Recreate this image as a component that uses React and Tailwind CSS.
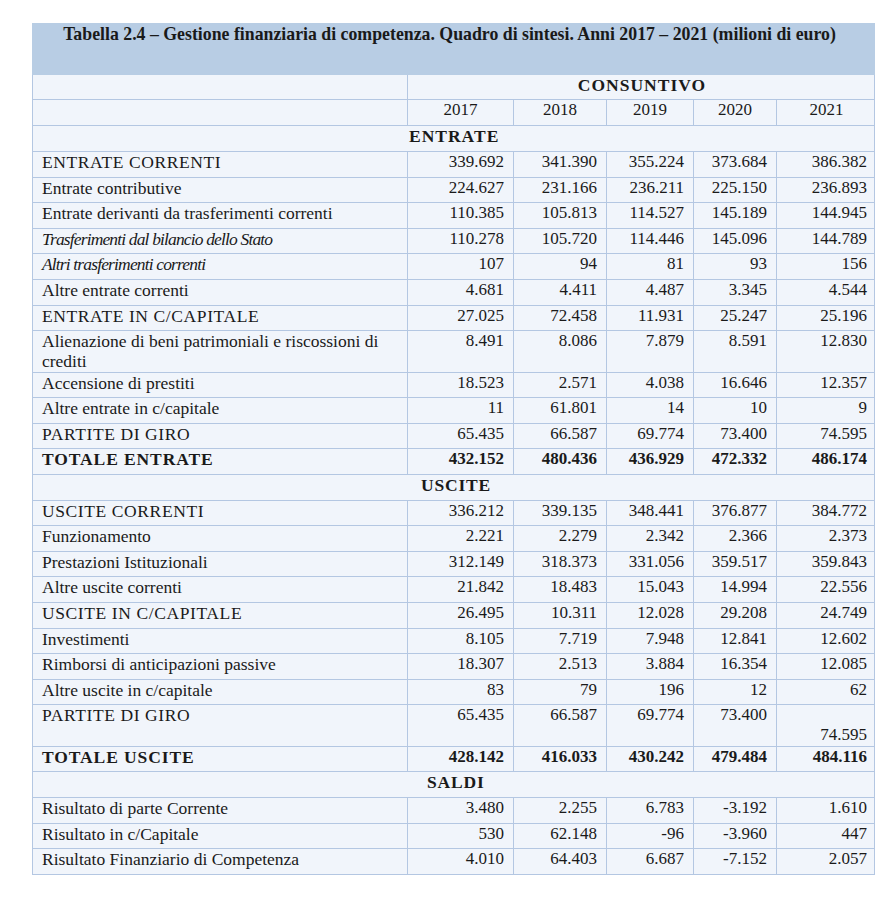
const ROWS = [
  { label: "ENTRATE CORRENTI", v: ["339.692", "341.390", "355.224", "373.684", "386.382"], caps: true },
  { label: "Entrate contributive", v: ["224.627", "231.166", "236.211", "225.150", "236.893"] },
  { label: "Entrate derivanti da trasferimenti correnti", v: ["110.385", "105.813", "114.527", "145.189", "144.945"] },
  { label: "Trasferimenti dal bilancio dello Stato", v: ["110.278", "105.720", "114.446", "145.096", "144.789"], italic: true },
  { label: "Altri trasferimenti correnti", v: ["107", "94", "81", "93", "156"], italic: true },
  { label: "Altre entrate correnti", v: ["4.681", "4.411", "4.487", "3.345", "4.544"] },
  { label: "ENTRATE IN C/CAPITALE", v: ["27.025", "72.458", "11.931", "25.247", "25.196"], caps: true },
  { label: "Alienazione di beni patrimoniali e riscossioni di crediti", v: ["8.491", "8.086", "7.879", "8.591", "12.830"], tall: true },
  { label: "Accensione di prestiti", v: ["18.523", "2.571", "4.038", "16.646", "12.357"] },
  { label: "Altre entrate in c/capitale", v: ["11", "61.801", "14", "10", "9"] },
  { label: "PARTITE DI GIRO", v: ["65.435", "66.587", "69.774", "73.400", "74.595"], caps: true },
  { label: "TOTALE ENTRATE", v: ["432.152", "480.436", "436.929", "472.332", "486.174"], bold: true },
  { section: "USCITE", pad: "pl-[388px]" },
  { label: "USCITE CORRENTI", v: ["336.212", "339.135", "348.441", "376.877", "384.772"], caps: true },
  { label: "Funzionamento", v: ["2.221", "2.279", "2.342", "2.366", "2.373"] },
  { label: "Prestazioni Istituzionali", v: ["312.149", "318.373", "331.056", "359.517", "359.843"] },
  { label: "Altre uscite correnti", v: ["21.842", "18.483", "15.043", "14.994", "22.556"] },
  { label: "USCITE IN C/CAPITALE", v: ["26.495", "10.311", "12.028", "29.208", "24.749"], caps: true },
  { label: "Investimenti", v: ["8.105", "7.719", "7.948", "12.841", "12.602"] },
  { label: "Rimborsi di anticipazioni passive", v: ["18.307", "2.513", "3.884", "16.354", "12.085"] },
  { label: "Altre uscite in c/capitale", v: ["83", "79", "196", "12", "62"] },
  { label: "PARTITE DI GIRO", v: ["65.435", "66.587", "69.774", "73.400", "74.595"], caps: true, tall: true, lastLow: true },
  { label: "TOTALE USCITE", v: ["428.142", "416.033", "430.242", "479.484", "484.116"], bold: true },
  { section: "SALDI", pad: "pl-[394px]" },
  { label: "Risultato di parte Corrente", v: ["3.480", "2.255", "6.783", "-3.192", "1.610"] },
  { label: "Risultato in c/Capitale", v: ["530", "62.148", "-96", "-3.960", "447"] },
  { label: "Risultato Finanziario di Competenza", v: ["4.010", "64.403", "6.687", "-7.152", "2.057"] },
];

const GRID = "grid grid-cols-[375px_106px_93px_87px_83px_99px]";
const YEARS = ["2017", "2018", "2019", "2020", "2021"];

function labelClass(r) {
  if (r.italic) return "italic tracking-[-0.85px]";
  if (r.bold) return "tracking-[0.9px]";
  if (r.caps) return "tracking-[0.6px]";
  return "";
}

function Section({ text, pad }) {
  return (
    <div className={`h-[25.6px] border-b border-x border-[#b4c7e2] font-bold text-[17.5px] tracking-[0.8px] leading-[20px] ${pad}`}>
      {text}
    </div>
  );
}

export default function App() {
  return (
    <div className="min-h-screen bg-white pt-[23px] text-[#1a1a1a] text-[17px] leading-[20px] font-['Liberation_Serif',serif]">
      <div className="ml-[32px] w-[843px] bg-[#f1f5fb]">
        {/* Title band */}
        <div className="h-[52px] bg-[#b8cde4] text-center font-bold text-[17.8px] pt-[1px] pr-[8px]">
          Tabella 2.4 – Gestione finanziaria di competenza. Quadro di sintesi. Anni 2017 – 2021 (milioni di euro)
        </div>

        {/* Header */}
        <div className={`${GRID} h-[25px] border-b border-x border-[#b4c7e2]`}>
          <div className="border-r border-[#b4c7e2]" />
          <div className="col-span-5 text-center font-bold text-[17.5px] tracking-[1px]">CONSUNTIVO</div>
        </div>
        <div className={`${GRID} h-[26px] border-b border-x border-[#b4c7e2]`}>
          <div className="border-r border-[#b4c7e2]" />
          {YEARS.map((y, i) => (
            <div key={y} className={`text-center ${i < 4 ? "border-r border-[#b4c7e2]" : ""}`}>{y}</div>
          ))}
        </div>
        <div className="h-[26px] border-b border-x border-[#b4c7e2] font-bold text-[17.5px] tracking-[1px] pl-[376px]">ENTRATE</div>

        {ROWS.map((r, idx) =>
          r.section ? (
            <Section key={idx} text={r.section} pad={r.pad} />
          ) : (
            <div
              key={idx}
              className={`${GRID} ${r.tall ? "h-[41.5px]" : "h-[25.6px]"} border-b border-x border-[#b4c7e2] ${r.bold ? "font-bold" : ""}`}
            >
              <div className={`border-r border-[#b4c7e2] pl-[9px] pr-[14px] text-[17.5px] ${labelClass(r)}`}>
                {r.label}
              </div>
              {r.v.map((n, i) => (
                <div
                  key={i}
                  className={`flex justify-end pr-[9px] ${i < 4 ? "border-r border-[#b4c7e2]" : ""} ${
                    r.lastLow && i === 4 ? "items-end pb-[1px]" : "items-start"
                  }`}
                >
                  {n}
                </div>
              ))}
            </div>
          )
        )}
      </div>
    </div>
  );
}
